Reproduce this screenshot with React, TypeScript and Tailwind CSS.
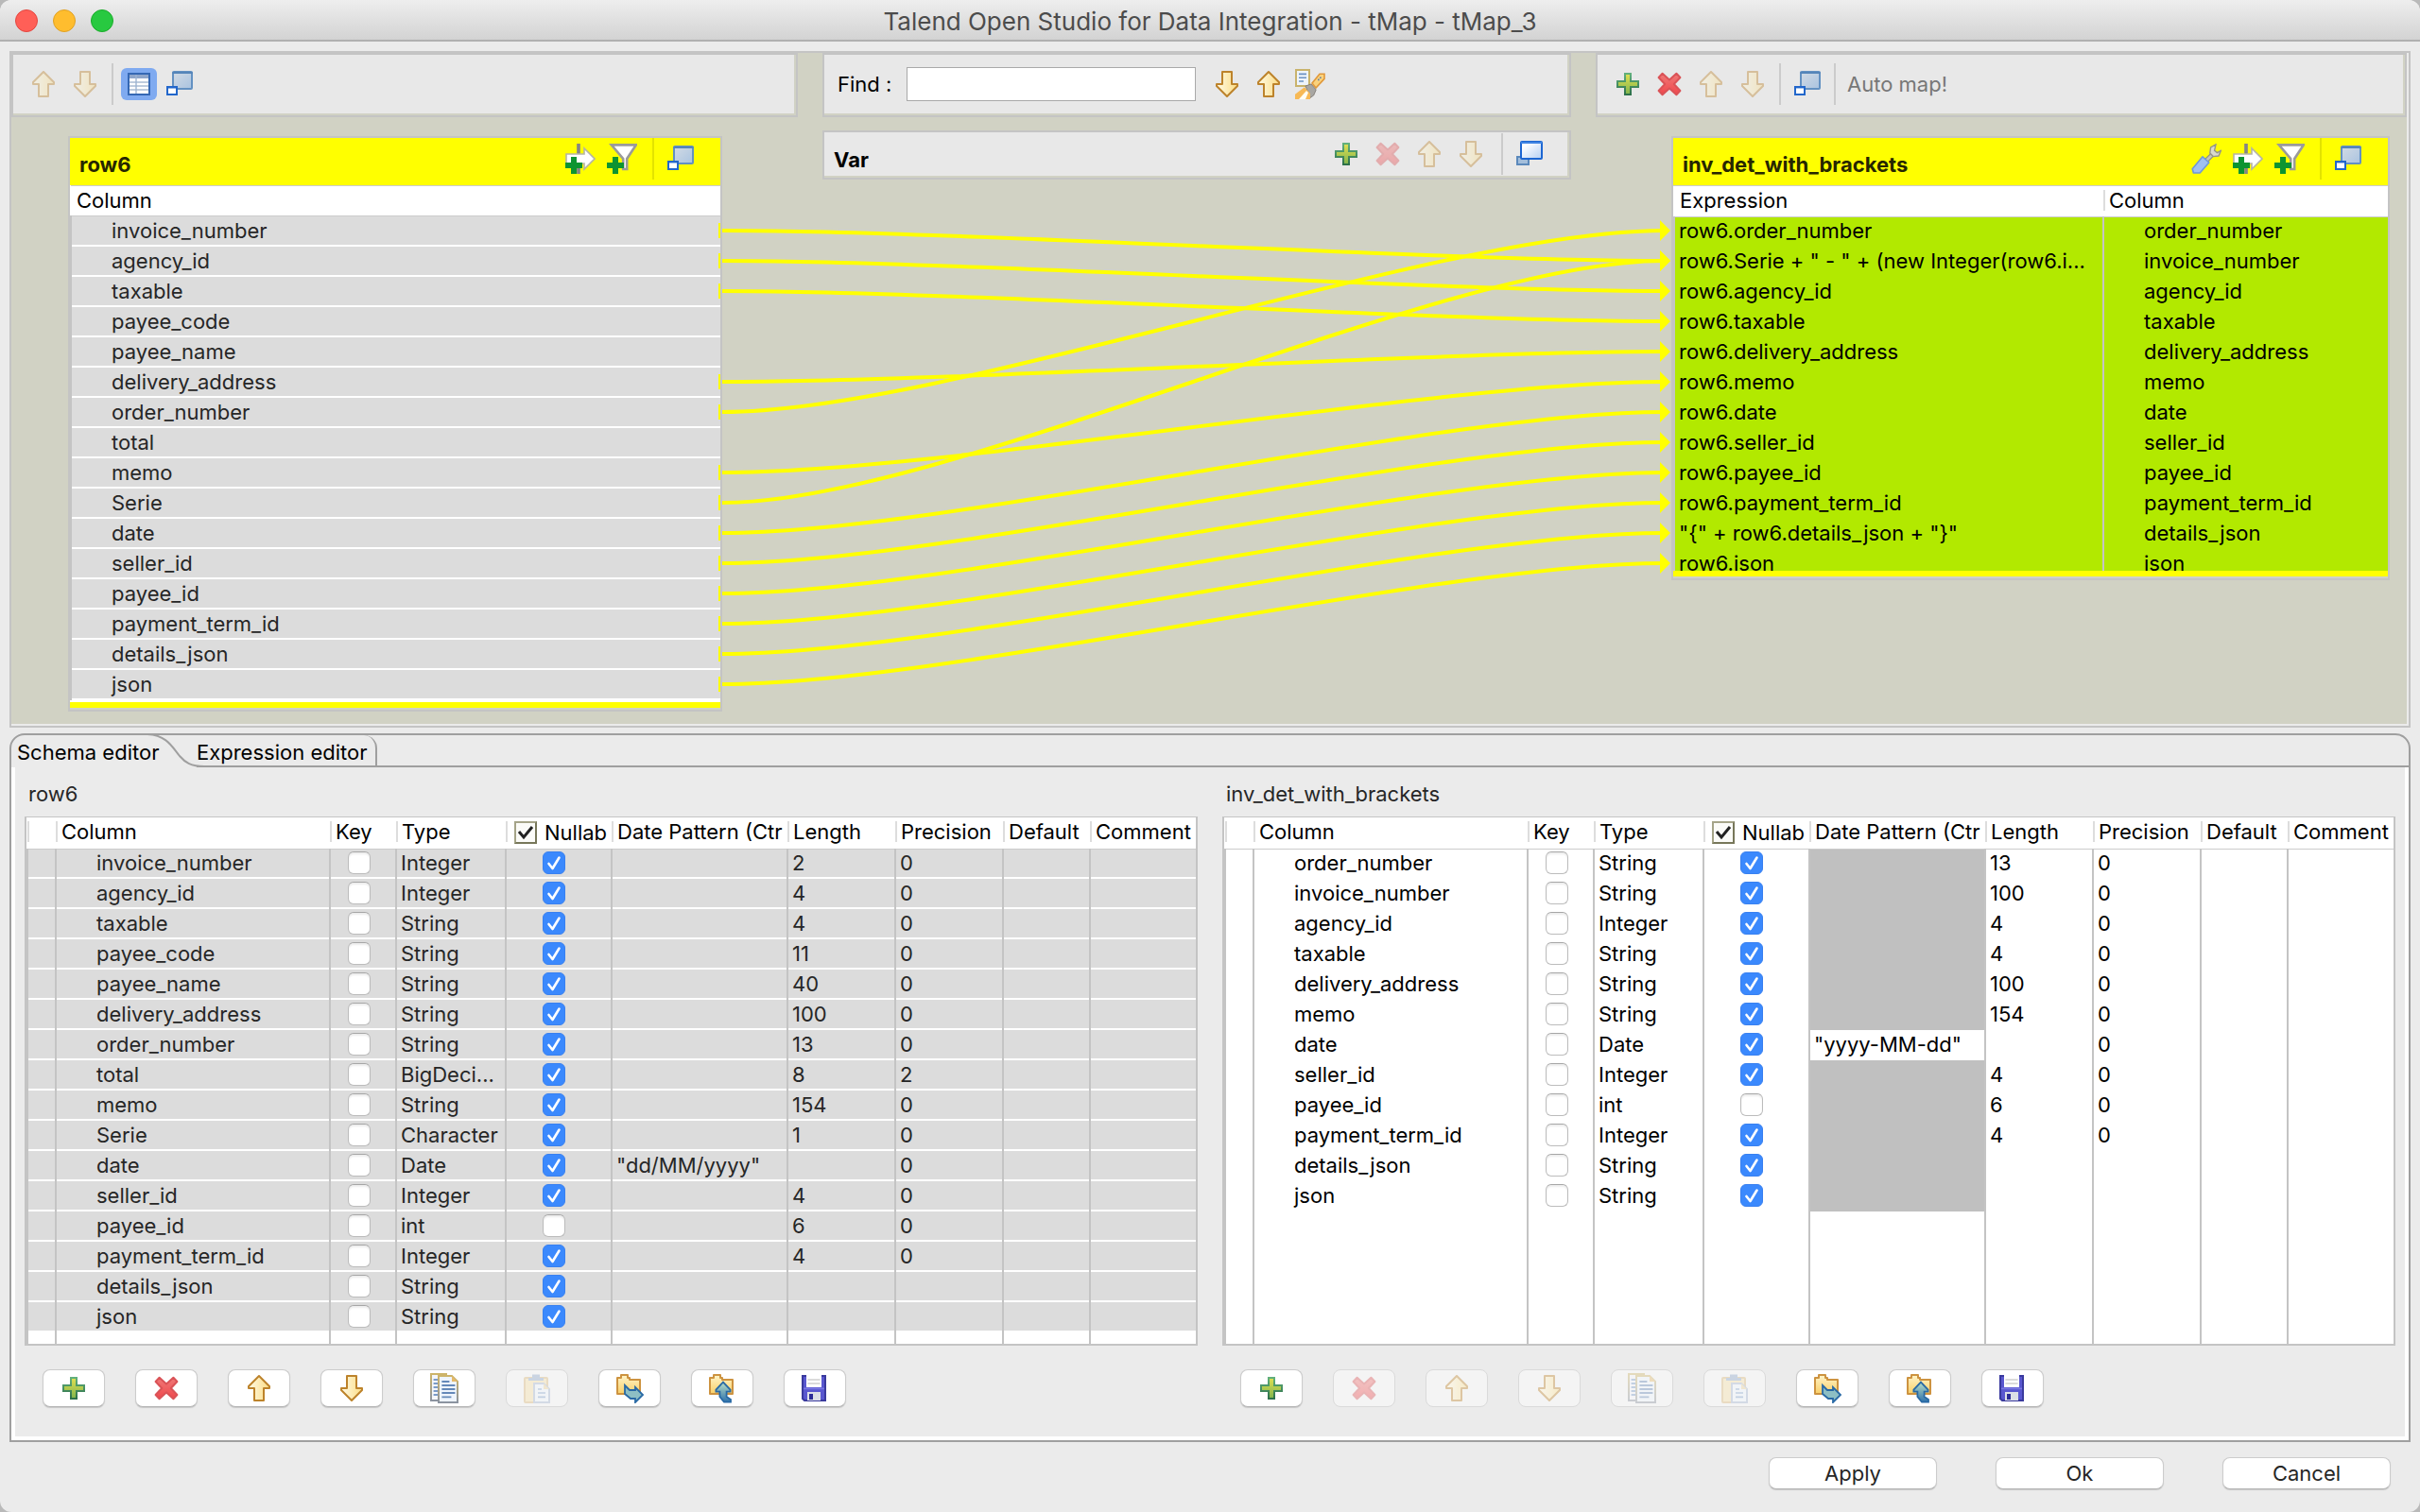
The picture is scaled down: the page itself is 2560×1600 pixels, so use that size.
import clsx from "clsx";
import { useId, type ReactNode } from "react";

//
// data
//

type SchemaRow = {
  name: string;
  type: string;
  nullable: boolean;
  pattern?: string;
  length?: string;
  precision?: string;
};

const row = (
  name: string,
  type: string,
  length = "",
  precision = "",
  nullable = true,
  pattern = ""
): SchemaRow => ({ name, type, length, precision, nullable, pattern });

const INPUT_ROWS: SchemaRow[] = [
  row("invoice_number", "Integer", "2", "0"),
  row("agency_id", "Integer", "4", "0"),
  row("taxable", "String", "4", "0"),
  row("payee_code", "String", "11", "0"),
  row("payee_name", "String", "40", "0"),
  row("delivery_address", "String", "100", "0"),
  row("order_number", "String", "13", "0"),
  row("total", "BigDeci...", "8", "2"),
  row("memo", "String", "154", "0"),
  row("Serie", "Character", "1", "0"),
  row("date", "Date", "", "0", true, '"dd/MM/yyyy"'),
  row("seller_id", "Integer", "4", "0"),
  row("payee_id", "int", "6", "0", false),
  row("payment_term_id", "Integer", "4", "0"),
  row("details_json", "String"),
  row("json", "String"),
];

const OUTPUT_ROWS: SchemaRow[] = [
  row("order_number", "String", "13", "0"),
  row("invoice_number", "String", "100", "0"),
  row("agency_id", "Integer", "4", "0"),
  row("taxable", "String", "4", "0"),
  row("delivery_address", "String", "100", "0"),
  row("memo", "String", "154", "0"),
  row("date", "Date", "", "0", true, '"yyyy-MM-dd"'),
  row("seller_id", "Integer", "4", "0"),
  row("payee_id", "int", "6", "0", false),
  row("payment_term_id", "Integer", "4", "0"),
  row("details_json", "String"),
  row("json", "String"),
];

const EXPRESSIONS: Record<string, string> = {
  invoice_number: 'row6.Serie + " - " + (new Integer(row6.i...',
  details_json: '"{" + row6.details_json + "}"',
};

// [input row, output row]
const LINKS = [
  [0, 1],
  [1, 2],
  [2, 3],
  [5, 4],
  [6, 0],
  [8, 5],
  [9, 1],
  [10, 6],
  [11, 7],
  [12, 8],
  [13, 9],
  [14, 10],
  [15, 11],
];

//
// icons, all on a 16x16 grid
//

function Icon(props: { children: ReactNode; faded?: boolean }) {
  return (
    <svg
      className={clsx("w-8 h-8 shrink-0", props.faded && "opacity-40")}
      viewBox="0 0 16 16"
      aria-hidden
    >
      {props.children}
    </svg>
  );
}

function Gradients() {
  return (
    <svg className="absolute w-0 h-0" aria-hidden>
      <defs>
        <linearGradient id="gold" x1="0" x2="1" y1="0" y2="0">
          <stop offset="0" stopColor="#fffbe6" />
          <stop offset="1" stopColor="#fbdc85" />
        </linearGradient>
        <linearGradient id="green" x1="0" x2="0" y1="0" y2="1">
          <stop offset="0" stopColor="#e2e052" />
          <stop offset="1" stopColor="#7fb44c" />
        </linearGradient>
        <linearGradient id="greenEdge" x1="0" x2="0" y1="0" y2="1">
          <stop offset="0" stopColor="#62b07c" />
          <stop offset="1" stopColor="#2d7049" />
        </linearGradient>
        <linearGradient id="red" x1="0" x2="0" y1="0" y2="1">
          <stop offset="0" stopColor="#ef7a78" />
          <stop offset="1" stopColor="#f0474c" />
        </linearGradient>
        <linearGradient id="folder" x1="0" x2="0" y1="0" y2="1">
          <stop offset="0" stopColor="#fff4c8" />
          <stop offset="1" stopColor="#f9cf68" />
        </linearGradient>
        <linearGradient id="glass" x1="0" x2="1" y1="0" y2="1">
          <stop offset="0.2" stopColor="#ffffff" />
          <stop offset="1" stopColor="#b5d0f3" />
        </linearGradient>
        <linearGradient id="glassDim" x1="0" x2="1" y1="0" y2="1">
          <stop offset="0" stopColor="#d3dbe4" />
          <stop offset="1" stopColor="#a9c3e0" />
        </linearGradient>
        <linearGradient id="paperEdge" x1="0" x2="0" y1="0" y2="1">
          <stop offset="0" stopColor="#cdb469" />
          <stop offset="1" stopColor="#8b93a0" />
        </linearGradient>
        <linearGradient id="tealArrow" x1="0" x2="0" y1="0" y2="1">
          <stop offset="0" stopColor="#b9dfc6" />
          <stop offset="1" stopColor="#2f72ab" />
        </linearGradient>
      </defs>
    </svg>
  );
}

function ArrowUp(props: { faded?: boolean }) {
  return (
    <Icon faded={props.faded}>
      <path
        d="M8 1.5 13.5 7v1H10.5v6.5h-5V8H2.5V7Z"
        fill="url(#gold)"
        stroke="#bd832b"
        strokeLinejoin="round"
      />
    </Icon>
  );
}

function ArrowDown(props: { faded?: boolean }) {
  return (
    <Icon faded={props.faded}>
      <path
        d="M8 14.5 13.5 9V8H10.5V1.5h-5V8H2.5v1Z"
        fill="url(#gold)"
        stroke="#bd832b"
        strokeLinejoin="round"
      />
    </Icon>
  );
}

function Plus() {
  return (
    <Icon>
      <path
        d="M6.5 2.5h3v4h4v3h-4v4h-3v-4h-4v-3h4Z"
        fill="url(#green)"
        stroke="url(#greenEdge)"
      />
    </Icon>
  );
}

function Cross(props: { faded?: boolean }) {
  return (
    <Icon faded={props.faded}>
      <path
        d="M4.3 2.4 8 5.8l3.7-3.4 2 2.1L10.4 8l3.3 3.5-2 2.1L8 10.2l-3.7 3.4-2-2.1L5.6 8 2.3 4.5Z"
        fill="url(#red)"
        stroke="#da5357"
        strokeLinejoin="round"
      />
    </Icon>
  );
}

function TableIcon() {
  return (
    <Icon>
      <rect x="2.5" y="2.5" width="11" height="11" fill="#fff" stroke="#3568b4" />
      <path d="M3 3h10v2H3Z" fill="#8fa6ca" />
      <path d="M3 7h10M3 9h10M3 11h10" stroke="#a9bcd4" strokeWidth="0.7" />
      <path d="M6.5 3v10" stroke="#9db4d2" strokeWidth="0.7" />
    </Icon>
  );
}

function Minimize() {
  return (
    <Icon>
      <rect x="4.5" y="1.5" width="10" height="9" rx="0.5" fill="url(#glassDim)" stroke="#6391c2" />
      <path d="M4.2 2h10.6" stroke="#5585b9" />
      <rect x="1.5" y="9.5" width="5" height="4" fill="#fff" stroke="#2267cb" />
      <path d="M1 9.7h6" stroke="#2267cb" />
    </Icon>
  );
}

function Restore() {
  return (
    <Icon>
      <rect x="1.5" y="9.5" width="6" height="4" fill="#a3bedb" stroke="#5b89bb" />
      <rect x="3.5" y="1.5" width="11" height="9" rx="0.5" fill="url(#glass)" stroke="#1c66d2" />
      <path d="M3.5 2h11" stroke="#3f84e2" />
    </Icon>
  );
}

function Highlighter() {
  return (
    <Icon>
      <rect x="0.5" y="0.5" width="7" height="8.5" fill="#eef4fb" stroke="#c9b36c" />
      <path d="M2 2.7h4M2 4.6h4M2 6.5h2.5" stroke="#6c92c2" strokeWidth="0.8" />
      <path d="M9 7.5 13 2.6h2.5v2.6L11 10Z" fill="#fbd27c" stroke="#e0983b" strokeWidth="0.8" />
      <path d="M12 5.7h0.8M13 4.6h0.8" stroke="#5f7ea8" strokeWidth="0.8" />
      <path d="M5.5 9 8.5 8l2.6 3-1.3 3-1.8 1.2Z" fill="#a8a6a2" stroke="#87827c" strokeWidth="0.5" />
      <path d="M0 16v-2.6L5 9.6 8 13v3Z" fill="#f7b955" />
      <path d="m2 16 4-4.5 1 1L5.5 16Z" fill="#fffdf2" />
    </Icon>
  );
}

function GreenCross() {
  return <path d="M3 7h3v3h3v3H6v3H3v-3H0v-3h3Z" fill="#0d9431" />;
}

function AddExpression() {
  return (
    <Icon>
      <path d="M7 0v16" stroke="#858585" strokeWidth="1.6" />
      <path
        d="M0.5 5.5H10V2.5L15.5 8 10 13.5V10.5H0.5Z"
        fill="#fff"
        stroke="#b5b5a2"
        strokeWidth="0.8"
      />
      <path d="M7 0v5M7 11v5" stroke="#858585" strokeWidth="1.6" />
      <GreenCross />
    </Icon>
  );
}

function AddFilter() {
  return (
    <Icon>
      <path d="M2.4 0.7h13L10.6 8v5.5H8.6V8Z" fill="#fff" stroke="#9a9a9a" strokeWidth="1.3" />
      <GreenCross />
    </Icon>
  );
}

function Wrench() {
  return (
    <Icon>
      <path d="M6.3 9.2 10.6 5 12 6.3 7.8 10.6Z" fill="#c4c4b8" stroke="#8e8e80" strokeWidth="0.6" />
      <path
        d="M13 0.4 10.3 2 9.9 5l1.7 1.8 2.9-.3 1.2-2.8-2 1.1-1.4-1.2Z"
        fill="#d9d9cc"
        stroke="#94948a"
        strokeWidth="0.7"
      />
      <path
        d="M0.6 13.4 6 6.9 9.4 10 4.6 15.5H1.2Z"
        fill="#9fc0f0"
        stroke="#6f98d8"
        strokeWidth="0.8"
        strokeLinejoin="round"
      />
    </Icon>
  );
}

function Copy(props: { faded?: boolean }) {
  return (
    <Icon faded={props.faded}>
      <path d="M1 0.5h8v14H1Z" fill="#f4f6fa" stroke="url(#paperEdge)" />
      <path d="M2.3 3.5h2.5M2.3 5.5h2.5M2.3 7.5h2.5M2.3 9.5h2.5M2.3 11.5h2.5" stroke="#7a9bc8" />
      <path d="M5 1.5h7l3 3v11H5Z" fill="#eef4fd" stroke="url(#paperEdge)" />
      <path d="M12 1.5v3h3Z" fill="#e4b96a" />
      <path d="M6.7 4.5h4M6.7 6.5h7M6.7 8.5h7M6.7 10.5h7M6.7 12.7h5" stroke="#6488b8" strokeWidth="0.9" />
    </Icon>
  );
}

function Paste() {
  return (
    <Icon faded>
      <rect x="1.5" y="2.5" width="12" height="13" rx="0.5" fill="#f5dfa6" stroke="#d9b878" />
      <path d="M3.5 4V2.5h2V0.8h4v1.7h2V4Z" fill="#8ea6c8" />
      <path d="M6.5 5.5h5l3 3v7h-8Z" fill="#eef4fd" stroke="#a3b4cf" />
      <path d="M11.5 5.5v3h3Z" fill="#ecd39a" />
      <path d="M8.5 8.5h2M8.5 10.5h4M8.5 12.7h4" stroke="#7a9bc8" strokeWidth="0.8" />
    </Icon>
  );
}

function FolderShape() {
  return (
    <path
      d="M1.5 4.5V2.5h2v-1.5h3.5v1.5h1v1H13.5v7.5h-12Z"
      fill="url(#folder)"
      stroke="#cd9340"
      strokeLinejoin="round"
    />
  );
}

function Import() {
  return (
    <Icon>
      <FolderShape />
      <path
        d="M5.5 6.5 8 9h3V7.5l4 4-4 4v-2H8.5L5.5 11Z"
        fill="#8dbfc4"
        stroke="#2869a5"
        strokeWidth="0.9"
      />
    </Icon>
  );
}

function Export() {
  return (
    <Icon>
      <FolderShape />
      <path
        d="M8.5 4.8 12.3 8.8v1h-2v2.7l2.2 1.5v1.3H9L6.7 12.5V9.8h-2v-1Z"
        fill="url(#tealArrow)"
        stroke="#2869a5"
        strokeWidth="0.9"
      />
    </Icon>
  );
}

function Save() {
  return (
    <Icon>
      <path d="M1.5 1.5h12v13h-11l-1-1Z" fill="#5957cf" stroke="#3a3a9e" />
      <path d="M3.5 0.5h8v7h-8Z" fill="#fff" />
      <path d="M4.2 3.5h6.6M4.2 5.5h6.6" stroke="#cfcfcf" strokeWidth="0.8" />
      <path d="M4 10h7v4.5H4Z" fill="#dcdfe6" />
      <path d="M5 11h2v3H5Z" fill="#2b2b96" />
      <path d="M2 8.2h11" stroke="#7b79e3" strokeWidth="0.8" />
    </Icon>
  );
}

//
// small parts
//

function ToolButton(props: {
  label: string;
  active?: boolean;
  disabled?: boolean;
  children: ReactNode;
}) {
  return (
    <button
      type="button"
      aria-label={props.label}
      disabled={props.disabled}
      className={clsx(
        "shrink-0",
        props.active && "rounded-md bg-[#7faaf0] px-[3px] py-px"
      )}
    >
      {props.children}
    </button>
  );
}

function Separator(props: { dark?: boolean }) {
  return (
    <div
      className={clsx("w-0.5 h-11 shrink-0", props.dark ? "bg-[#e3e300]" : "bg-[#cbcbcb]")}
    />
  );
}

function Bar(props: { className?: string; children: ReactNode }) {
  return (
    <div className={clsx("border-2 border-[#c4c4c4] pb-0.5 pr-0.5", props.className)}>
      <div className="h-full flex items-center bg-[#e8e8e8]">{props.children}</div>
    </div>
  );
}

function CheckBox(props: { label: string; checked?: boolean }) {
  return (
    <span className="relative block w-6 h-6">
      <input
        type="checkbox"
        aria-label={props.label}
        defaultChecked={props.checked}
        className="peer block w-6 h-6 appearance-none rounded-md border border-[#bcbcbc] border-t-[#a6a6a6] bg-white shadow-[inset_0_2px_2px_#ededed] checked:border-[#3880f0] checked:bg-[#3b89fd] checked:shadow-none"
      />
      <svg
        className="absolute inset-0 w-6 h-6 pointer-events-none opacity-0 peer-checked:opacity-100"
        viewBox="0 0 24 24"
        fill="none"
        stroke="#fff"
        strokeWidth="2.6"
        strokeLinecap="round"
        strokeLinejoin="round"
      >
        <path d="m6.5 13 4 5L17.5 6.5" />
      </svg>
    </span>
  );
}

//
// mapper
//

function MapperHeader(props: { title: string; children: ReactNode }) {
  return (
    <div className="h-[50px] flex items-start gap-3 bg-[#ffff00] pl-2.5 pr-[26px]">
      <h2 className="flex-1 pt-3 text-[22px] leading-[32px] font-bold text-[#262600]">
        {props.title}
      </h2>
      {props.children}
    </div>
  );
}

function InputTable() {
  return (
    <div className="w-[692px] shrink-0 border-2 border-[#c4c4c4] pb-0.5">
      <MapperHeader title="row6">
        <div className="flex gap-3 pt-1.5">
          <ToolButton label="Add expression column">
            <AddExpression />
          </ToolButton>
          <ToolButton label="Add filter">
            <AddFilter />
          </ToolButton>
        </div>
        <div className="pl-1">
          <Separator dark />
        </div>
        <div className="pt-1.5">
          <ToolButton label="Minimize row6">
            <Minimize />
          </ToolButton>
        </div>
      </MapperHeader>
      <table className="w-full table-fixed border-t border-[#cccccc] bg-white text-left">
        <thead>
          <tr className="h-8">
            <th className="border-b border-[#cccccc] p-0 pl-1.5 pb-0.5 font-normal">Column</th>
          </tr>
        </thead>
        <tbody className="text-[#262626]">
          {INPUT_ROWS.map((r, i) => (
            <tr key={r.name} className="h-8">
              <td className="border-l-2 border-[#c4c4c4] bg-[#dcdcdc] p-0 shadow-[inset_0_-2px_0_#fff]">
                <div className="flex items-center h-8 pl-[42px] pb-0.5">
                  <span className="flex-1">{r.name}</span>
                  {LINKS.some(([from]) => from === i) && (
                    <span className="w-0.5 h-4 bg-[#ffff00]" />
                  )}
                </div>
              </td>
            </tr>
          ))}
        </tbody>
      </table>
      <div className="h-0.5 bg-white" />
      <div className="h-1.5 bg-[#ffff00]" />
    </div>
  );
}

function OutputTable() {
  return (
    <div className="w-[760px] shrink-0 border-2 border-[#c4c4c4] pb-0.5">
      <MapperHeader title="inv_det_with_brackets">
        <div className="flex gap-3 pt-1.5">
          <ToolButton label="Table settings">
            <Wrench />
          </ToolButton>
          <ToolButton label="Add expression column">
            <AddExpression />
          </ToolButton>
          <ToolButton label="Add filter">
            <AddFilter />
          </ToolButton>
        </div>
        <div className="pl-1">
          <Separator dark />
        </div>
        <div className="pt-1.5">
          <ToolButton label="Minimize inv_det_with_brackets">
            <Minimize />
          </ToolButton>
        </div>
      </MapperHeader>
      <div className="h-[408px] overflow-hidden border-t border-[#cccccc]">
        <table className="w-full table-fixed bg-white text-left">
          <colgroup>
            <col className="w-[454px]" />
            <col />
          </colgroup>
          <thead>
            <tr className="h-8">
              <th className="border-b border-[#cccccc] p-0 pl-1.5 pb-0.5 font-normal">Expression</th>
              <th className="border-b border-[#cccccc] p-0 pb-0.5 font-normal">
                <div className="border-l-2 border-[#dddddd] h-[22px] leading-[22px] pl-1">Column</div>
              </th>
            </tr>
          </thead>
          <tbody className="bg-[#b2e900]">
            {OUTPUT_ROWS.map((r) => (
              <tr key={r.name} className="h-8">
                <td className="border-l-2 border-[#c4c4c4] p-0 pl-1 pb-0.5 whitespace-nowrap">
                  {EXPRESSIONS[r.name] ?? `row6.${r.name}`}
                </td>
                <td className="border-l-2 border-[#c4c4c4] p-0 pl-[42px] pb-0.5">{r.name}</td>
              </tr>
            ))}
          </tbody>
        </table>
      </div>
      <div className="h-1.5 bg-[#ffff00]" />
    </div>
  );
}

// row centers, measured from the bottom of the Var bar
const linkY = (index: number) => 54 + index * 32;

function Links() {
  return (
    <svg
      className="w-full h-[576px]"
      viewBox="0 0 1004 576"
      preserveAspectRatio="none"
      fill="none"
      aria-hidden
    >
      {LINKS.map(([from, to]) => {
        const y1 = linkY(from);
        const y2 = linkY(to);
        return (
          <g key={`${from}-${to}`}>
            <path
              d={`M0 ${y1}C240 ${y1} 756 ${y2} 996 ${y2}`}
              stroke="#ffff00"
              strokeWidth="4"
            />
            <path d={`M992 ${y2 - 11}L1003 ${y2}L992 ${y2 + 11}Z`} fill="#ffff00" />
          </g>
        );
      })}
    </svg>
  );
}

function Mapper() {
  const findId = useId();
  return (
    <section className="border-2 border-[#c4c4c4] pb-0.5 pr-0.5 bg-[#ebebeb]">
      <div className="h-[710px] bg-[#d1d2c4] overflow-hidden">
        <div className="flex h-[68px]">
          <Bar className="w-[832px]">
            <div className="flex items-center gap-3 pl-4">
              <ToolButton label="Move input up" disabled>
                <ArrowUp faded />
              </ToolButton>
              <ToolButton label="Move input down" disabled>
                <ArrowDown faded />
              </ToolButton>
              <Separator />
              <div className="flex items-center gap-2 -ml-1">
                <ToolButton label="Show columns" active>
                  <TableIcon />
                </ToolButton>
                <ToolButton label="Minimize all inputs">
                  <Minimize />
                </ToolButton>
              </div>
            </div>
          </Bar>
          <Bar className="flex-1 mx-[26px]">
            <label htmlFor={findId} className="pl-3.5 w-[87px]">
              Find :
            </label>
            <input
              id={findId}
              type="text"
              className="w-[306px] h-9 border border-[#a9a9a9] bg-white px-2 outline-none"
            />
            <div className="flex gap-3 pl-[17px]">
              <ToolButton label="Find next">
                <ArrowDown />
              </ToolButton>
              <ToolButton label="Find previous">
                <ArrowUp />
              </ToolButton>
              <ToolButton label="Highlight matches">
                <Highlighter />
              </ToolButton>
            </div>
          </Bar>
          <Bar className="w-[858px]">
            <div className="flex items-center gap-3 pl-4">
              <ToolButton label="Add output table">
                <Plus />
              </ToolButton>
              <ToolButton label="Remove output table">
                <Cross />
              </ToolButton>
              <ToolButton label="Move output up" disabled>
                <ArrowUp faded />
              </ToolButton>
              <ToolButton label="Move output down" disabled>
                <ArrowDown faded />
              </ToolButton>
              <Separator />
              <ToolButton label="Minimize all outputs">
                <Minimize />
              </ToolButton>
              <Separator />
              <button type="button" className="text-[#777777]">
                Auto map!
              </button>
            </div>
          </Bar>
        </div>
        <div className="flex items-start pt-3.5 pl-[60px] pr-[18px]">
          <div className="pt-1.5">
            <InputTable />
          </div>
          <div className="flex-1">
            <Bar className="h-[52px] mx-[106px]">
              <h2 className="flex-1 pl-2.5 pt-3 font-bold">Var</h2>
              <div className="flex items-center gap-3 pr-6">
                <ToolButton label="Add variable">
                  <Plus />
                </ToolButton>
                <ToolButton label="Remove variable" disabled>
                  <Cross faded />
                </ToolButton>
                <ToolButton label="Move variable up" disabled>
                  <ArrowUp faded />
                </ToolButton>
                <ToolButton label="Move variable down" disabled>
                  <ArrowDown faded />
                </ToolButton>
                <div className="pl-1">
                  <Separator />
                </div>
                <ToolButton label="Restore Var">
                  <Restore />
                </ToolButton>
              </div>
            </Bar>
            <Links />
          </div>
          <div className="pt-1.5">
            <OutputTable />
          </div>
        </div>
      </div>
    </section>
  );
}

//
// schema editor
//

function HeaderCell(props: { children?: ReactNode }) {
  return (
    <th className="p-0 pb-0.5 font-normal border-b border-[#cccccc]">
      <div className="h-[22px] leading-[22px] pl-1 border-l-2 border-[#dddddd] whitespace-nowrap">
        {props.children}
      </div>
    </th>
  );
}

function SchemaTable(props: { rows: SchemaRow[]; readOnly?: boolean }) {
  const cell = clsx(
    "border-l-2 border-[#c4c4c4] p-0 pl-1 pb-0.5 whitespace-nowrap",
    props.readOnly && "bg-[#dcdcdc] shadow-[inset_0_-2px_0_#fff]"
  );
  return (
    <div className="flex-1 border-2 border-t border-[#c4c4c4] bg-white overflow-hidden">
      <table className="w-full h-full table-fixed text-left">
        <colgroup>
          <col className="w-[30px]" />
          <col className="w-[290px]" />
          <col className="w-[70px]" />
          <col className="w-[116px]" />
          <col className="w-[112px]" />
          <col className="w-[186px]" />
          <col className="w-[114px]" />
          <col className="w-[114px]" />
          <col className="w-[92px]" />
          <col />
        </colgroup>
        <thead className="text-black">
          <tr className="h-[33px]">
            <HeaderCell />
            <HeaderCell>Column</HeaderCell>
            <HeaderCell>Key</HeaderCell>
            <HeaderCell>Type</HeaderCell>
            <HeaderCell>
              <label className="flex items-center gap-2 pl-[3px]">
                <NullableToggle />
                Nullab
              </label>
            </HeaderCell>
            <HeaderCell>Date Pattern (Ctr</HeaderCell>
            <HeaderCell>Length</HeaderCell>
            <HeaderCell>Precision</HeaderCell>
            <HeaderCell>Default</HeaderCell>
            <HeaderCell>Comment</HeaderCell>
          </tr>
        </thead>
        <tbody className={props.readOnly ? "text-[#262626]" : "text-black"}>
          {props.rows.map((r) => (
            <tr key={r.name} className="h-8">
              <td className={cell} />
              <td className={cell}>
                <span className="pl-[38px]">{r.name}</span>
              </td>
              <td className={cell}>
                <div className="pl-3.5">
                  <CheckBox label={`${r.name} key`} />
                </div>
              </td>
              <td className={cell}>{r.type}</td>
              <td className={cell}>
                <div className="pl-[34px]">
                  <CheckBox label={`${r.name} nullable`} checked={r.nullable} />
                </div>
              </td>
              <td className={clsx(cell, !props.readOnly && !r.pattern && "bg-[#c0c0c0]")}>
                {r.pattern}
              </td>
              <td className={cell}>{r.length}</td>
              <td className={cell}>{r.precision}</td>
              <td className={cell} />
              <td className={cell} />
            </tr>
          ))}
          <tr>
            {Array.from({ length: 10 }, (_, i) => (
              <td key={i} className="border-l-2 border-[#c4c4c4] p-0" />
            ))}
          </tr>
        </tbody>
      </table>
    </div>
  );
}

function NullableToggle() {
  return (
    <span className="relative block w-6 h-6">
      <input
        type="checkbox"
        defaultChecked
        className="peer block w-6 h-6 appearance-none border-2 border-[#a5a488] border-b-[#77775a] border-r-[#77775a] bg-[#fbfbf8]"
      />
      <svg
        className="absolute inset-0 w-6 h-6 pointer-events-none opacity-0 peer-checked:opacity-100"
        viewBox="0 0 24 24"
        fill="none"
        stroke="#222"
        strokeWidth="3"
      >
        <path d="m5 11 5 6L19 6" />
      </svg>
    </span>
  );
}

function PushButton(props: { label: string; disabled?: boolean; children: ReactNode }) {
  return (
    <button
      type="button"
      aria-label={props.label}
      disabled={props.disabled}
      className={clsx(
        "w-[66px] h-10 flex items-center justify-center rounded-lg border",
        props.disabled
          ? "border-[#dadada] bg-[#f4f4f4]"
          : "border-[#cccccc] border-b-[#b4b4b4] bg-white shadow-[0_1px_1px_#c8c8c8]"
      )}
    >
      {props.children}
    </button>
  );
}

function SchemaPane(props: { title: string; rows: SchemaRow[]; readOnly?: boolean }) {
  const off = !props.readOnly;
  return (
    <div className="flex-1 flex flex-col">
      <h3 className="h-[52px] pl-1 pt-3.5 text-[#262626]">{props.title}</h3>
      <SchemaTable rows={props.rows} readOnly={props.readOnly} />
      <div className="flex gap-8 pl-[19px] pt-[25px] pb-[31px]">
        <PushButton label="Add column">
          <Plus />
        </PushButton>
        <PushButton label="Remove column" disabled={off}>
          <Cross faded={off} />
        </PushButton>
        <PushButton label="Move column up" disabled={off}>
          <ArrowUp faded={off} />
        </PushButton>
        <PushButton label="Move column down" disabled={off}>
          <ArrowDown faded={off} />
        </PushButton>
        <PushButton label="Copy" disabled={off}>
          <Copy faded={off} />
        </PushButton>
        <PushButton label="Paste" disabled>
          <Paste />
        </PushButton>
        <PushButton label="Import schema">
          <Import />
        </PushButton>
        <PushButton label="Export schema">
          <Export />
        </PushButton>
        <PushButton label="Save schema">
          <Save />
        </PushButton>
      </div>
    </div>
  );
}

function Editor() {
  return (
    <section className="flex-1 flex flex-col mt-1.5 border-2 border-[#9f9f9f] rounded-t-[16px]">
      <div className="flex h-[34px] text-black" role="tablist">
        <button type="button" role="tab" aria-selected className="w-[158px] pl-1.5 pt-0.5 text-left whitespace-nowrap">
          Schema editor
        </button>
        <svg className="w-[60px] h-[34px] -ml-3.5 shrink-0" viewBox="0 0 60 34" fill="none" aria-hidden>
          <path
            d="M0 -1C20 0 26 12 34 22C40 29 46 33 60 33"
            stroke="#9f9f9f"
            strokeWidth="2"
          />
        </svg>
        <button
          type="button"
          role="tab"
          aria-selected={false}
          className="-ml-2 w-[191px] pt-1 border-b-2 border-r-2 border-[#9f9f9f] rounded-tr-[14px] text-left whitespace-nowrap"
        >
          Expression editor
        </button>
        <div className="flex-1 border-b-2 border-[#9f9f9f]" />
      </div>
      <div className="flex-1 flex gap-[26px] border-4 border-t-0 border-white px-2.5">
        <SchemaPane title="row6" rows={INPUT_ROWS} readOnly />
        <SchemaPane title="inv_det_with_brackets" rows={OUTPUT_ROWS} />
      </div>
    </section>
  );
}

//
// window
//

export default function App() {
  return (
    <div className="bg-[#b9b9b9]">
      <Gradients />
      <div className="h-screen flex flex-col overflow-hidden rounded-xl bg-[#ebebeb] font-['Inter',sans-serif] text-[22px] leading-[28px] text-black">
        <header className="h-11 shrink-0 grid grid-cols-[1fr_auto_1fr] items-center border-b-2 border-[#b0b0b0] bg-linear-to-b from-[#eeeeee] to-[#d3d3d3]">
          <div className="flex gap-4 pl-4 pt-0.5">
            <button type="button" aria-label="Close" className="w-6 h-6 rounded-full border border-[#e2463f] bg-[#ff5f57]" />
            <button type="button" aria-label="Minimize" className="w-6 h-6 rounded-full border border-[#dfa023] bg-[#ffbd2e]" />
            <button type="button" aria-label="Zoom" className="w-6 h-6 rounded-full border border-[#1aab29] bg-[#28c940]" />
          </div>
          <h1 className="pt-1 text-[26px] text-[#4c4c4c]">
            Talend Open Studio for Data Integration - tMap - tMap_3
          </h1>
        </header>
        <main className="flex-1 flex flex-col px-2.5 pt-2.5">
          <Mapper />
          <Editor />
        </main>
        <footer className="flex justify-end gap-[62px] pt-4 pb-6 pr-[31px]">
          {["Apply", "Ok", "Cancel"].map((label) => (
            <button
              key={label}
              type="button"
              className="w-[178px] h-[34px] rounded-lg border border-[#cccccc] border-b-[#b4b4b4] bg-white text-[#262626] shadow-[0_1px_1px_#c8c8c8]"
            >
              {label}
            </button>
          ))}
        </footer>
      </div>
    </div>
  );
}
